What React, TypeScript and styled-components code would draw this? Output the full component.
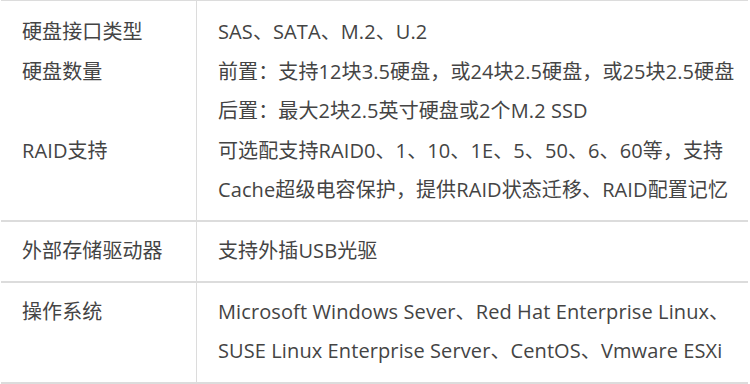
import React from "react";
import styled, { createGlobalStyle } from "styled-components";

const Global = createGlobalStyle`
  html, body { margin: 0; padding: 0; background: #ffffff; }
  body {
    font-family: "Open Sans", "Noto Sans CJK SC", sans-serif;
    color: #444444;
  }
`;

const Table = styled.div`
  margin-left: 1px;
  width: 747px;
  border-top: 1px solid #dcdcdc;
  display: flex;
  flex-direction: column;
`;

const Row = styled.div<{ $pt: number; $pb: number }>`
  display: grid;
  grid-template-columns: 196px 1fr;
  border-bottom: 2px solid #dcdcdc;
  & > div {
    padding-top: ${(p) => p.$pt}px;
    padding-bottom: ${(p) => p.$pb}px;
  }
`;

const Label = styled.div`
  padding-left: 21px;
  border-right: 1px solid #dcdcdc;
  display: flex;
  flex-direction: column;
`;

const Value = styled.div`
  padding-left: 21px;
  display: flex;
  flex-direction: column;
`;

const Line = styled.div`
  font-size: 20px;
  line-height: 39.6px;
  height: 39.6px;
  letter-spacing: 0.1px;
  white-space: nowrap;
`;

export default function App() {
  return (
    <>
      <Global />
      <Table>
        <Row $pt={11} $pb={10}>
          <Label>
            <Line>硬盘接口类型</Line>
            <Line>硬盘数量</Line>
            <Line />
            <Line>RAID支持</Line>
          </Label>
          <Value>
            <Line>SAS、SATA、M.2、U.2</Line>
            <Line>前置：支持12块3.5硬盘，或24块2.5硬盘，或25块2.5硬盘</Line>
            <Line>后置：最大2块2.5英寸硬盘或2个M.2 SSD</Line>
            <Line>可选配支持RAID0、1、10、1E、5、50、6、60等，支持</Line>
            <Line>Cache超级电容保护，提供RAID状态迁移、RAID配置记忆</Line>
          </Value>
        </Row>
        <Row $pt={9} $pb={10}>
          <Label>
            <Line>外部存储驱动器</Line>
          </Label>
          <Value>
            <Line>支持外插USB光驱</Line>
          </Value>
        </Row>
        <Row $pt={9} $pb={11}>
          <Label>
            <Line>操作系统</Line>
          </Label>
          <Value>
            <Line>Microsoft Windows Sever、Red Hat Enterprise Linux、</Line>
            <Line>SUSE Linux Enterprise Server、CentOS、Vmware ESXi</Line>
          </Value>
        </Row>
      </Table>
    </>
  );
}
